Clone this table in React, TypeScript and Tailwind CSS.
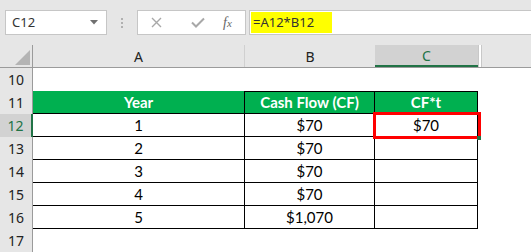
import React from 'react';

type Row = { n: number; head?: boolean; cells?: string[] };

const ROWS: Row[] = [
  { n: 10 },
  { n: 11, head: true, cells: ['Year', 'Cash Flow (CF)', 'CF*t'] },
  { n: 12, cells: ['1', '$70', '$70'] },
  { n: 13, cells: ['2', '$70', ''] },
  { n: 14, cells: ['3', '$70', ''] },
  { n: 15, cells: ['4', '$70', ''] },
  { n: 16, cells: ['5', '$1,070', ''] },
  { n: 17 },
];

const COLS = [
  { key: 'A', w: 'w-[212px]' },
  { key: 'B', w: 'w-[130px]' },
  { key: 'C', w: 'w-[103px]' },
];

const FormulaBar = () => (
  <div className="flex h-[45px] items-start bg-[#e6e6e6] pt-[10px] pl-[5px]">
    {/* name box */}
    <div className="flex h-[25px] w-[102px] items-center justify-between border border-[#c6c6c6] bg-white pl-[6px] pr-[8px] font-['Noto_Sans',sans-serif] text-[13px] text-[#333]">
      <span>C12</span>
      <svg width="8" height="5" viewBox="0 0 8 5">
        <path d="M0 0 L8 0 L4 4.5 Z" fill="#707070" />
      </svg>
    </div>
    <div className="flex h-[25px] w-[30px] flex-col items-center justify-center gap-[2px]">
      <span className="h-[2px] w-[2px] bg-[#b0b0b0]" />
      <span className="h-[2px] w-[2px] bg-[#b0b0b0]" />
      <span className="h-[2px] w-[2px] bg-[#b0b0b0]" />
    </div>
    {/* cancel / enter / function */}
    <div className="flex h-[25px] w-[109px] items-center border border-[#c6c6c6] bg-white">
      <svg className="ml-[13px]" width="11" height="11" viewBox="0 0 11 11">
        <path d="M1 1 L10 10 M10 1 L1 10" stroke="#a8a8a8" strokeWidth="1.4" fill="none" />
      </svg>
      <svg className="ml-[29px]" width="14" height="11" viewBox="0 0 14 11">
        <path d="M1 5.5 L5 9.5 L13 1.5" stroke="#a8a8a8" strokeWidth="2" fill="none" />
      </svg>
      <span className="ml-[18px] font-['Liberation_Serif',serif] text-[14px] italic text-[#666]">
        f<span className="text-[11px]">x</span>
      </span>
    </div>
    {/* formula input */}
    <div className="ml-[3px] flex h-[25px] flex-1 items-stretch border-y border-l border-[#c6c6c6] bg-white p-[1px]">
      <div className="flex w-[81px] items-center bg-[#ffff00] pl-[2px] font-['Noto_Sans',sans-serif] text-[13px] text-[#333]">
        =A12*B12
      </div>
    </div>
  </div>
);

const ColumnHeaders = () => (
  <div className="flex h-[23px] border-b border-[#9b9b9b] bg-[#e6e6e6] font-['Noto_Sans',sans-serif] text-[14px] text-[#222]">
    <div className="flex w-[33px] items-end justify-end border-r border-[#9b9b9b] pr-[2px] pb-[2px]">
      {/* select-all corner */}
      <svg width="15" height="15" viewBox="0 0 15 15">
        <path d="M15 0 L15 15 L0 15 Z" fill="#b4b4b4" />
      </svg>
    </div>
    <div className="flex w-[212px] items-center justify-center border-r border-[#d0d0d0]">A</div>
    <div className="flex w-[130px] items-center justify-center">B</div>
    <div className="flex w-[103px] items-center justify-center border-b-2 border-[#217346] bg-[#d2d2d2] text-[#217346]">
      C
    </div>
    <div className="w-[1px] bg-[#c8c8c8]" />
    <div className="w-[2px] bg-white" />
    <div className="flex-1 border-l border-[#c8c8c8]" />
  </div>
);

const SheetRow = ({ row }: { row: Row }) => {
  const selected = row.n === 12;
  return (
    <div className="flex h-[23px]">
      <div
        className={
          selected
            ? "flex w-[33px] items-center justify-center border-r-2 border-[#217346] bg-[#d2d2d2] font-['Noto_Sans',sans-serif] text-[14px] text-[#217346]"
            : "flex w-[33px] items-center justify-center border-r border-[#9b9b9b] bg-[#e6e6e6] font-['Noto_Sans',sans-serif] text-[14px] text-[#222]"
        }
      >
        {row.n}
      </div>
      {COLS.map((col, i) => {
        if (!row.cells) return <div key={col.key} className={col.w} />;
        const text = row.cells[i];
        const top = row.head && i > 0 ? 'border-t' : '';
        return (
          <div
            key={col.key}
            className={`${col.w} ${top} flex items-center justify-center border-r border-b border-black font-['Lato',sans-serif] text-[15px] ${
              row.head ? 'bg-[#00b050] font-bold text-white' : 'bg-white text-black'
            }`}
          >
            {text}
          </div>
        );
      })}
      <div className="flex-1 bg-white" />
    </div>
  );
};

export default function App() {
  return (
    <div className="h-[252px] w-[531px] overflow-hidden bg-white">
      <FormulaBar />
      <div className="relative">
        <ColumnHeaders />
        {ROWS.map((row) => (
          <SheetRow key={row.n} row={row} />
        ))}
        {/* active cell outline */}
        <div className="absolute top-[67px] left-[373px] h-[27px] w-[108px] border-[3px] border-[#ff0000]" />
        <div className="absolute top-[91px] left-[477px] h-[4px] w-[4px] bg-[#217346]" />
      </div>
    </div>
  );
}
